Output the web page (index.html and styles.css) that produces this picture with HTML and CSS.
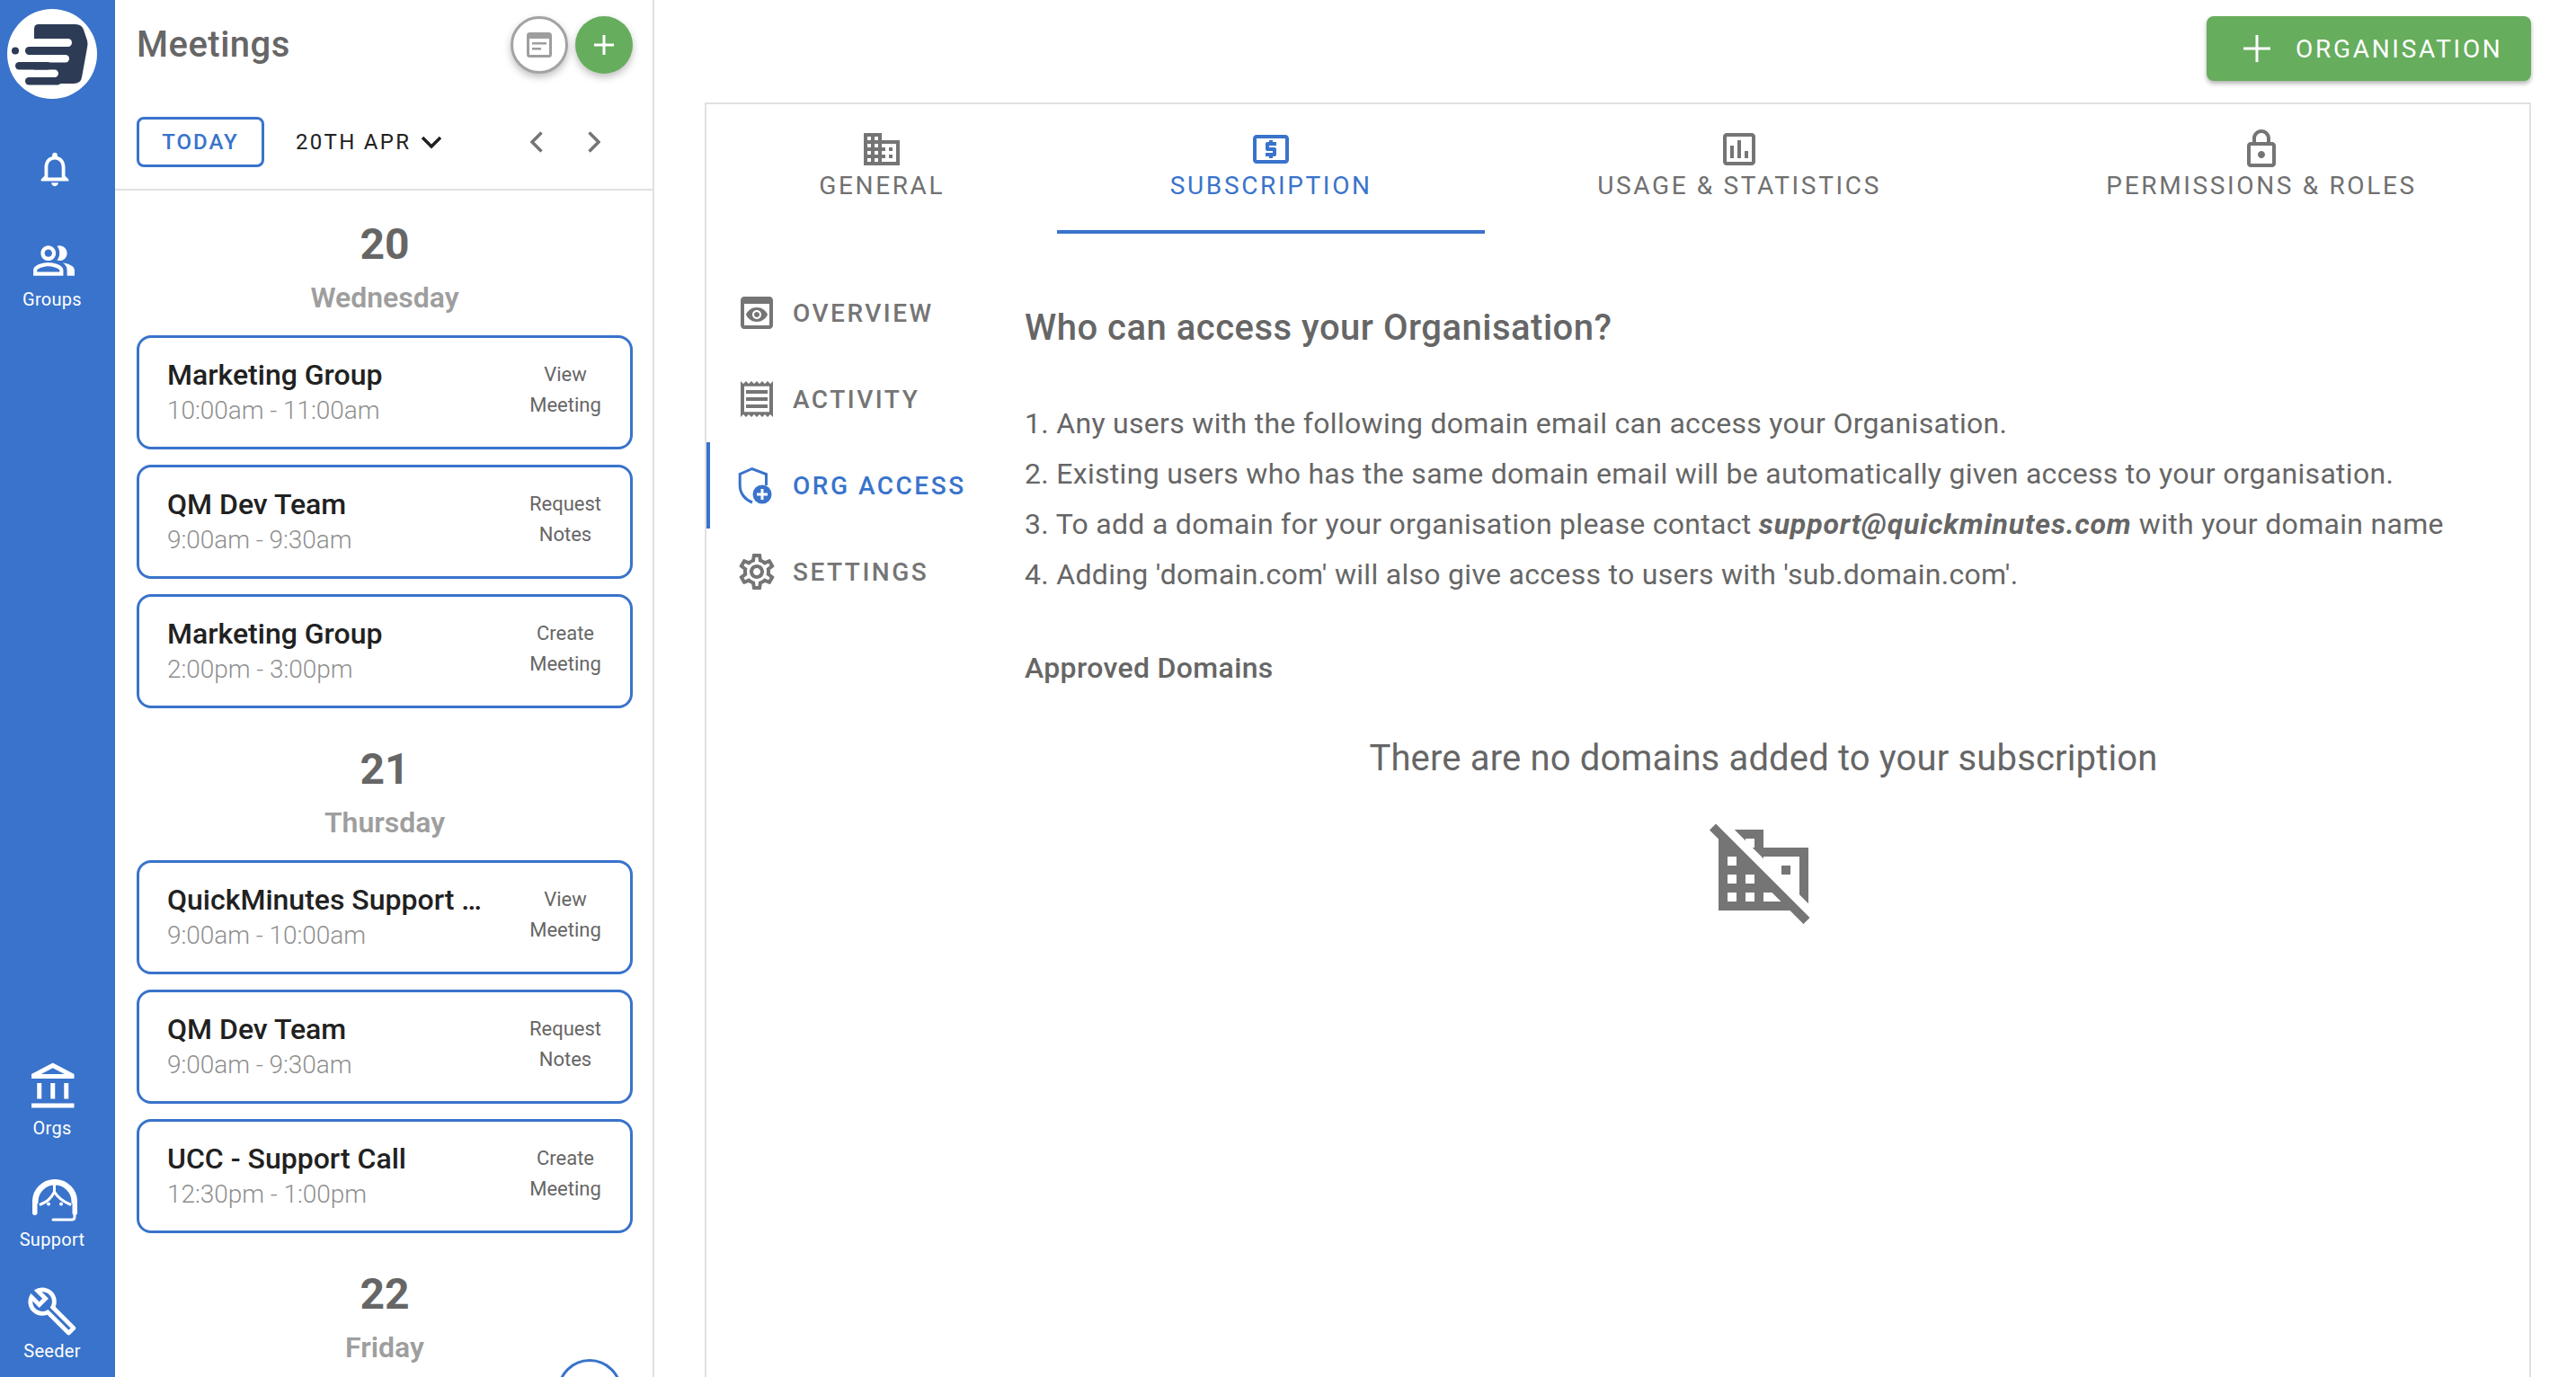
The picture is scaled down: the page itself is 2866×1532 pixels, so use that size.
FILE: index.html
```html
<!DOCTYPE html>
<html lang="en">
<head>
<meta charset="utf-8">
<title>Organisation access</title>
<link rel="stylesheet" href="styles.css">
</head>
<body>
<nav class="rail">
  <div class="rail-top">
    <svg class="logo" viewBox="0 0 100 100">
      <circle cx="50" cy="50" r="50" fill="#fff"/>
      <path fill="#2d3b55" d="M30 36V22q0-5 5-5H76q7 0 9 6l4 12q1 4 0 8l-6 33q-1 7-9 7H30z"/>
      <rect x="22" y="33" width="50" height="9" rx="4.5" fill="#fff"/>
      <rect x="18" y="51" width="51" height="8.5" rx="4.2" fill="#fff"/>
      <rect x="18" y="67.5" width="39" height="8.5" rx="4.2" fill="#fff"/>
      <rect x="20" y="42" width="40" height="9" rx="4.5" fill="#2d3b55"/>
      <rect x="9" y="59" width="40" height="8.5" rx="4.2" fill="#2d3b55"/>
      <rect x="20" y="76" width="40" height="8.5" rx="4.2" fill="#2d3b55"/>
      <circle cx="9" cy="46.5" r="4" fill="#2d3b55"/>
    </svg>
    <svg class="bell" viewBox="0 0 24 24"><path d="M12 22c1.100 0 2-.9 2-2h-4c0 1.100.9 2 2 2zm6-6v-5c0-3.070-1.630-5.640-4.500-6.320V4c0-.83-.67-1.500-1.500-1.500s-1.500.67-1.500 1.500v.68C7.640 5.360 6 7.920 6 11v5l-2 2v1h16v-1l-2-2zm-2 1H8v-6c0-2.480 1.510-4.500 4-4.500s4 2.020 4 4.500v6z"/></svg>
    <a class="rail-item groups">
      <svg class="ic-groups" viewBox="0 0 24 24"><path d="M16.670 13.130C18.040 14.060 19 15.320 19 17v3h4v-3c0-2.180-3.570-3.470-6.330-3.870z"/><path d="M15 12c2.210 0 4-1.790 4-4s-1.790-4-4-4c-.47 0-.91.1-1.330.24C14.500 5.270 15 6.580 15 8s-.5 2.730-1.330 3.760c.42.14.86.24 1.330.24z"/><path d="M9 12c2.210 0 4-1.790 4-4s-1.790-4-4-4-4 1.790-4 4 1.790 4 4 4zm0-6c1.100 0 2 .9 2 2s-.9 2-2 2-2-.9-2-2 .9-2 2-2z"/><path d="M9 13c-2.670 0-8 1.340-8 4v3h16v-3c0-2.660-5.330-4-8-4zm6 5H3v-.99C3.200 16.290 6.300 15 9 15s5.800 1.290 6 2v1z"/></svg>
      <span>Groups</span>
    </a>
  </div>
  <div class="rail-bottom">
    <a class="rail-item item-orgs">
      <svg class="ic-orgs" viewBox="0 0 24 24"><path d="M6.500 10h-2v7h2v-7zm6 0h-2v7h2v-7zm8.500 9H2v2h19v-2zm-2.500-9h-2v7h2v-7zm-7-6.740L16.710 6H6.290l5.210-2.740m0-2.260L2 6v2h19V6l-9.500-5z"/></svg>
      <span>Orgs</span>
    </a>
    <a class="rail-item">
      <svg class="ic-support" viewBox="15 10 50 50">
        <path class="hs" d="M18.200 37V35a21.800 21.800 0 0 1 43.600 0V37"/>
        <rect x="15" y="35" width="5.500" height="15" rx="2.700"/>
        <rect x="59.500" y="35" width="5.500" height="15" rx="2.700"/>
        <path class="hs thin" d="M24 38C30 36 36 31 39.500 24C43 30 50 35 57 38M39.500 24V17"/>
        <circle cx="33" cy="37.500" r="2"/>
        <circle cx="47" cy="37.500" r="2"/>
        <path class="hs thin" d="M62 48V52Q62 55 58.500 55H38"/>
      </svg>
      <span>Support</span>
    </a>
    <a class="rail-item">
      <svg class="ic-58" viewBox="0 0 24 24"><path d="M22.610 18.990l-9.080-9.080c.93-2.340.45-5.100-1.440-7C9.790.61 6.210.4 3.660 2.260L7.500 6.110 6.080 7.520 2.250 3.690C.39 6.230.6 9.820 2.900 12.110c1.860 1.860 4.570 2.350 6.890 1.480l9.110 9.110c.39.39 1.020.39 1.410 0l2.300-2.300c.4-.38.4-1.010 0-1.410zm-3 1.600l-9.460-9.460c-.61.45-1.290.72-2 .82-1.360.2-2.790-.21-3.830-1.250C3.370 9.760 2.930 8.500 3 7.260l3.090 3.090 4.240-4.240-3.090-3.090c1.240-.07 2.490.37 3.440 1.310 1.080 1.080 1.490 2.570 1.240 3.960-.12.71-.42 1.370-.88 1.960l9.450 9.450-.88.88z"/></svg>
      <span>Seeder</span>
    </a>
  </div>
</nav>

<aside class="panel">
  <header class="panel-head">
    <div class="head-row">
      <h1 class="panel-title">Meetings</h1>
      <div class="round-group">
        <button class="round round-white">
          <svg viewBox="0 0 28 28" class="note"><rect x="1.500" y="1.500" width="25" height="25" rx="2" class="note-frame"/><rect x="1" y="1" width="26" height="6" rx="2" class="note-bar"/><rect x="6" y="11" width="16" height="2.500" class="note-bar"/><rect x="6" y="17" width="10" height="2.500" class="note-bar"/></svg>
        </button>
        <button class="round round-green">
          <svg viewBox="0 0 22 22" class="plus-sm"><path d="M11 0V22M0 11H22"/></svg>
        </button>
      </div>
    </div>
    <div class="date-row">
      <button class="today">TODAY</button>
      <span class="date-label">20TH APR</span>
      <svg class="date-caret" viewBox="0 0 24 16"><path d="M2 3L12 13L22 3"/></svg>
      <svg class="arrow" viewBox="0 0 14 24"><path d="M12.500 1.500L2 12L12.500 22.500"/></svg>
      <svg class="arrow arrow-next" viewBox="0 0 14 24"><path d="M1.500 1.500L12 12L1.500 22.500"/></svg>
    </div>
  </header>
  <div class="days">
    <section class="day">
      <div class="day-num">20</div>
      <div class="day-name">Wednesday</div>
      <div class="card"><div class="card-main"><div class="card-title">Marketing Group</div><div class="card-time">10:00am - 11:00am</div></div><div class="card-action">View<br>Meeting</div></div>
      <div class="card"><div class="card-main"><div class="card-title">QM Dev Team</div><div class="card-time">9:00am - 9:30am</div></div><div class="card-action">Request<br>Notes</div></div>
      <div class="card"><div class="card-main"><div class="card-title">Marketing Group</div><div class="card-time">2:00pm - 3:00pm</div></div><div class="card-action">Create<br>Meeting</div></div>
    </section>
    <section class="day">
      <div class="day-num">21</div>
      <div class="day-name">Thursday</div>
      <div class="card"><div class="card-main"><div class="card-title">QuickMinutes Support …</div><div class="card-time">9:00am - 10:00am</div></div><div class="card-action">View<br>Meeting</div></div>
      <div class="card"><div class="card-main"><div class="card-title">QM Dev Team</div><div class="card-time">9:00am - 9:30am</div></div><div class="card-action">Request<br>Notes</div></div>
      <div class="card"><div class="card-main"><div class="card-title">UCC - Support Call</div><div class="card-time">12:30pm - 1:00pm</div></div><div class="card-action">Create<br>Meeting</div></div>
    </section>
    <section class="day">
      <div class="day-num">22</div>
      <div class="day-name">Friday</div>
    </section>
  </div>
  <div class="float-circle"></div>
</aside>

<main class="main">
  <div class="topbar">
    <button class="org-btn">
      <svg viewBox="0 0 30 30" class="plus-lg"><path d="M15 0V30M0 15H30"/></svg>
      <span>ORGANISATION</span>
    </button>
  </div>
  <div class="sheet">
    <div class="tabs">
      <div class="tab">
        <svg viewBox="0 0 24 24"><path d="M12 7V3H2v18h20V7H12zM6 19H4v-2h2v2zm0-4H4v-2h2v2zm0-4H4V9h2v2zm0-4H4V5h2v2zm4 12H8v-2h2v2zm0-4H8v-2h2v2zm0-4H8V9h2v2zm0-4H8V5h2v2zm10 12h-8v-2h2v-2h-2v-2h2v-2h-2V9h8v10zm-2-8h-2v2h2v-2zm0 4h-2v2h2v-2z"/></svg>
        <span>GENERAL</span>
      </div>
      <div class="tab tab-active">
        <svg viewBox="0 0 24 24"><path d="M11 17h2v-1h1c.55 0 1-.45 1-1v-3c0-.55-.45-1-1-1h-3v-1h4V8h-2V7h-2v1h-1c-.55 0-1 .45-1 1v3c0 .55.45 1 1 1h3v1H9v2h2v1zm9-13H4c-1.110 0-1.990.89-1.990 2L2 18c0 1.110.89 2 2 2h16c1.110 0 2-.89 2-2V6c0-1.110-.89-2-2-2zm0 14H4V6h16v12z"/></svg>
        <span>SUBSCRIPTION</span>
      </div>
      <div class="tab">
        <svg viewBox="0 0 24 24"><path d="M19 3H5c-1.100 0-2 .9-2 2v14c0 1.100.9 2 2 2h14c1.100 0 2-.9 2-2V5c0-1.100-.9-2-2-2zm0 16H5V5h14v14zM7 10h2v7H7zm4-3h2v10h-2zm4 6h2v4h-2z"/></svg>
        <span>USAGE &amp; STATISTICS</span>
      </div>
      <div class="tab">
        <svg viewBox="0 0 24 24"><path d="M18 8h-1V6c0-2.760-2.240-5-5-5S7 3.240 7 6v2H6c-1.100 0-2 .9-2 2v10c0 1.100.9 2 2 2h12c1.100 0 2-.9 2-2V10c0-1.100-.9-2-2-2zM9 6c0-1.660 1.340-3 3-3s3 1.340 3 3v2H9V6zm9 14H6V10h12v10zm-6-3c1.100 0 2-.9 2-2s-.9-2-2-2-2 .9-2 2 .9 2 2 2z"/></svg>
        <span>PERMISSIONS &amp; ROLES</span>
      </div>
    </div>
    <div class="sheet-body">
      <ul class="menu">
        <li class="menu-item">
          <svg viewBox="0 0 24 24"><path d="M19 3H5c-1.110 0-2 .9-2 2v14c0 1.100.89 2 2 2h14c1.100 0 2-.9 2-2V5c0-1.100-.89-2-2-2zm0 16H5V7h14v12zm-5.500-6c0 .83-.67 1.500-1.500 1.500s-1.500-.67-1.500-1.500.67-1.500 1.500-1.500 1.500.67 1.500 1.500zM12 9c-2.730 0-5.060 1.660-6 4 .94 2.340 3.270 4 6 4s5.060-1.660 6-4c-.94-2.340-3.270-4-6-4zm0 6.500c-1.380 0-2.500-1.120-2.500-2.500s1.120-2.500 2.500-2.500 2.500 1.120 2.500 2.500-1.120 2.500-2.500 2.500z"/></svg>
          <span>OVERVIEW</span>
        </li>
        <li class="menu-item">
          <svg viewBox="0 0 24 24"><path d="M19.500 3.500L18 2l-1.500 1.500L15 2l-1.500 1.500L12 2l-1.500 1.500L9 2 7.500 3.500 6 2 4.500 3.500 3 2v20l1.500-1.500L6 22l1.500-1.500L9 22l1.500-1.500L12 22l1.500-1.500L15 22l1.500-1.500L18 22l1.500-1.500L21 22V2l-1.500 1.500zM19 19.090H5V4.910h14v14.180zM6 15h12v2H6zm0-4h12v2H6zm0-4h12v2H6z"/></svg>
          <span>ACTIVITY</span>
        </li>
        <li class="menu-item menu-active">
          <svg viewBox="0 0 48 48">
            <path class="shield" d="M34.500 24V11.500L18.700 5.500L5.200 11.500V24C5.200 33 11 40 19 43"/>
            <circle cx="30" cy="34" r="10.500"/>
            <path class="shield-plus" d="M30 28V40M24 34H36"/>
          </svg>
          <span>ORG ACCESS</span>
        </li>
        <li class="menu-item">
          <svg viewBox="0 0 24 24"><path d="M19.430 12.980c.04-.32.07-.64.07-.98 0-.34-.03-.66-.07-.98l2.110-1.650c.19-.15.24-.42.12-.64l-2-3.460c-.09-.16-.26-.25-.44-.25-.06 0-.12.01-.17.03l-2.490 1c-.52-.4-1.080-.73-1.690-.98l-.38-2.650C14.460 2.180 14.250 2 14 2h-4c-.25 0-.46.18-.49.42l-.38 2.650c-.61.25-1.170.59-1.690.98l-2.490-1c-.06-.02-.12-.03-.18-.03-.17 0-.34.09-.43.25l-2 3.460c-.13.22-.07.49.12.64l2.110 1.650c-.04.32-.07.65-.07.98 0 .33.03.66.07.98l-2.110 1.650c-.19.15-.24.42-.12.64l2 3.460c.09.16.26.25.44.25.06 0 .12-.01.17-.03l2.490-1c.52.4 1.080.73 1.690.98l.38 2.650c.03.24.24.42.49.42h4c.25 0 .46-.18.49-.42l.38-2.650c.61-.25 1.170-.59 1.690-.98l2.490 1c.06.02.12.03.18.03.17 0 .34-.09.43-.25l2-3.460c.12-.22.07-.49-.12-.64l-2.110-1.650zm-1.980-1.710c.04.31.05.52.05.73 0 .21-.02.43-.05.73l-.14 1.130.89.7 1.080.84-.7 1.210-1.270-.51-1.040-.42-.9.68c-.43.32-.84.56-1.250.73l-1.060.43-.16 1.130-.2 1.350h-1.400l-.19-1.350-.16-1.130-1.060-.43c-.43-.18-.83-.41-1.230-.71l-.91-.7-1.060.43-1.270.51-.7-1.210 1.080-.84.89-.7-.14-1.130c-.03-.31-.05-.54-.05-.74s.02-.43.05-.73l.14-1.130-.89-.7-1.080-.84.7-1.210 1.270.51 1.040.42.9-.68c.43-.32.84-.56 1.250-.73l1.060-.43.16-1.130.2-1.350h1.390l.19 1.350.16 1.130 1.060.43c.43.18.83.41 1.230.71l.91.7 1.060-.43 1.270-.51.7 1.210-1.070.85-.89.7.14 1.130zM12 8c-2.210 0-4 1.790-4 4s1.790 4 4 4 4-1.790 4-4-1.790-4-4-4zm0 6c-1.100 0-2-.9-2-2s.9-2 2-2 2 .9 2 2-.9 2-2 2z"/></svg>
          <span>SETTINGS</span>
        </li>
      </ul>
      <article class="content">
        <h2 class="content-title">Who can access your Organisation?</h2>
        <ol class="rules">
          <li>1. Any users with the following domain email can access your Organisation.</li>
          <li>2. Existing users who has the same domain email will be automatically given access to your organisation.</li>
          <li>3. To add a domain for your organisation please contact <b>support@quickminutes.com</b> with your domain name</li>
          <li>4. Adding 'domain.com' will also give access to users with 'sub.domain.com'.</li>
        </ol>
        <h3 class="approved">Approved Domains</h3>
        <div class="empty">
          <p>There are no domains added to your subscription</p>
          <svg viewBox="0 0 24 24"><path d="M1.410 1.690L0 3.100l2 2V21h15.900l3 3 1.410-1.410-20.900-20.900zM6 19H4v-2h2v2zm0-4H4v-2h2v2zm0-4H4V9h2v2zm4 8H8v-2h2v2zm0-4H8v-2h2v2zm2 4v-2h1.900l2 2H12zM8 5h2v2h-.45L12 9.450V9h8v8.450l2 2V7H12V3H5.550L8 5.450V5zm8 6h2v2h-2z"/></svg>
        </div>
      </article>
    </div>
  </div>
</main>
</body>
</html>
```

FILE: styles.css
```css
* { box-sizing: border-box; }
html, body { margin: 0; height: 100%; }
body {
  display: flex;
  width: 2866px;
  height: 1532px;
  overflow: hidden;
  background: #fff;
  font-family: Roboto, "Liberation Sans", sans-serif;
  color: #666;
}

/* left rail */
.rail {
  flex: none;
  width: 128px;
  height: 100%;
  padding: 10px 12px 17px 0;
  background: #3973cb;
  color: #fff;
  display: flex;
  flex-direction: column;
  justify-content: space-between;
  align-items: center;
}
.rail-top { display: flex; flex-direction: column; align-items: center; }
.rail-bottom { display: flex; flex-direction: column; align-items: center; gap: 39px; }
.logo { width: 100px; height: 100px; display: block; }
.bell { width: 46px; height: 46px; margin: 55px 0 0 6px; fill: #fff; display: block; }
.rail-item { display: flex; flex-direction: column; align-items: center; font-size: 20px; line-height: 24px; letter-spacing: .3px; }
.rail-item svg { fill: #fff; display: block; }
.groups { margin-top: 54px; }
.item-orgs { margin-bottom: 4px; }
.ic-groups { width: 50px; height: 50px; margin: 0 0 6px 4px; }
.ic-orgs { width: 60px; height: 60px; margin: 0 0 3px 4px; }
.ic-58 { width: 58px; height: 58px; margin-bottom: 3px; }
.ic-support { width: 50px; height: 50px; margin: 2px 0 5px 6px; }
.hs { fill: none; stroke: #fff; stroke-width: 6.500; }
.hs.thin { stroke-width: 3; stroke-linecap: round; }

/* meetings panel */
.panel {
  flex: none;
  position: relative;
  width: 600px;
  height: 100%;
  border-right: 2px solid #e0e0e0;
  overflow: hidden;
}
.panel-head { padding: 18px 22px 24px 24px; border-bottom: 2px solid #e0e0e0; }
.head-row { display: flex; align-items: center; justify-content: space-between; height: 64px; }
.panel-title { margin: 0; font-size: 40px; line-height: 48px; font-weight: 500; letter-spacing: .5px; color: #666; }
.round-group { display: flex; gap: 8px; }
.round {
  width: 64px;
  height: 64px;
  border-radius: 50%;
  padding: 0;
  display: flex;
  align-items: center;
  justify-content: center;
  box-shadow: 0 4px 8px rgba(0, 0, 0, .25);
}
.round-white { background: #fff; border: 3px solid #a3a3a3; }
.round-green { background: #66ad5d; border: 0; }
.note { width: 28px; height: 28px; }
.note-frame { fill: none; stroke: #9e9e9e; stroke-width: 3; }
.note-bar { fill: #9e9e9e; }
.plus-sm { width: 22px; height: 22px; }
.plus-sm path, .plus-lg path { stroke: #fff; stroke-width: 3; fill: none; }
.date-row { display: flex; align-items: center; margin-top: 48px; height: 56px; }
.today {
  width: 142px;
  height: 56px;
  background: #fff;
  border: 3px solid #3973cb;
  border-radius: 8px;
  color: #3973cb;
  font: 500 24px Roboto, sans-serif;
  letter-spacing: 2px;
}
.date-label { margin-left: 35px; font-size: 24px; font-weight: 400; letter-spacing: 2.300px; color: #212121; }
.date-caret { width: 24px; height: 16px; margin-left: 11px; }
.date-caret path { fill: none; stroke: #212121; stroke-width: 3.500; }
.arrow { width: 14px; height: 24px; margin-left: 98px; }
.arrow-next { margin-left: 50px; }
.arrow path { fill: none; stroke: #757575; stroke-width: 3.500; }
.days { padding: 32px 22px 0 24px; }
.day { margin-bottom: 40px; }
.day-num { font-size: 48px; line-height: 56px; font-weight: 700; text-align: center; color: #666; }
.day-name { margin: 9px 0 20px; font-size: 32px; line-height: 44px; font-weight: 600; text-align: center; color: #9e9e9e; }
.card {
  display: flex;
  justify-content: space-between;
  height: 127px;
  margin-bottom: 17px;
  padding: 21px 12px 0 31px;
  border: 3px solid #3973cb;
  border-radius: 16px;
}
.card:last-child { margin-bottom: 0; }
.card-title { font-size: 32px; line-height: 40px; font-weight: 500; color: #212121; }
.card-time { font-size: 28px; line-height: 40px; font-weight: 300; letter-spacing: -.05px; color: #8f8f8f; }
.card-action { width: 120px; padding-top: 3px; font-size: 22px; line-height: 34px; text-align: center; color: #666; }
.float-circle {
  position: absolute;
  left: 492px;
  top: 1512px;
  width: 72px;
  height: 72px;
  border: 3px solid #3973cb;
  border-radius: 50%;
  background: #fff;
}

/* main */
.main { flex: 1; min-width: 0; display: flex; flex-direction: column; padding: 0 50px 0 56px; height: 100%; }
.topbar { flex: none; display: flex; justify-content: flex-end; height: 114px; padding: 18px 0 0 0; }
.org-btn {
  display: flex;
  align-items: center;
  width: 361px;
  height: 72px;
  padding: 0 0 0 41px;
  border: 0;
  border-radius: 8px;
  background: #66ad5d;
  color: #fff;
  font: 400 28px Roboto, sans-serif;
  letter-spacing: 2.700px;
  box-shadow: 0 3px 5px rgba(0, 0, 0, .3);
}
.plus-lg { width: 30px; height: 30px; margin-right: 28px; }
.sheet { flex: 1; min-height: 0; border: 2px solid #e0e0e0; border-bottom: 0; overflow: hidden; }
.tabs { display: flex; }
.tab {
  flex: auto;
  display: flex;
  flex-direction: column;
  align-items: center;
  height: 144px;
  padding-top: 26px;
  border-bottom: 4px solid transparent;
  font-size: 28px;
  line-height: 34px;
  font-weight: 400;
  letter-spacing: 2.650px;
  color: #707070;
}
.tab svg { width: 48px; height: 48px; fill: #757575; flex: none; }
.tab-active { color: #3973cb; border-bottom-color: #3973cb; }
.tab-active svg { fill: #3973cb; }
.sheet-body { display: flex; }
.menu { flex: none; width: 354px; margin: 0; padding: 40px 0 0; list-style: none; }
.menu-item {
  display: flex;
  align-items: center;
  gap: 16px;
  height: 96px;
  padding-left: 28px;
  border-left: 4px solid transparent;
  font-size: 28px;
  font-weight: 500;
  letter-spacing: 2.500px;
  color: #757575;
}
.menu-item svg { width: 48px; height: 48px; fill: #757575; flex: none; }
.menu-active { color: #3973cb; border-left-color: #3973cb; }
.menu-active svg { fill: #3973cb; }
.shield { fill: none; stroke: #3973cb; stroke-width: 3; }
.shield-plus { fill: none; stroke: #fff; stroke-width: 3; }
.content { flex: 1; min-width: 0; padding: 81px 30px 0 0; }
.content-title { margin: 0; font-size: 40px; line-height: 48px; font-weight: 500; letter-spacing: .5px; color: #666; }
.rules { margin: 54px 0 0; padding: 0; list-style: none; font-size: 32px; line-height: 56px; letter-spacing: .3px; color: #666; }
.rules b { font-style: italic; font-weight: 700; letter-spacing: .83px; }
.approved { margin: 56px 0 0; font-size: 32px; line-height: 40px; font-weight: 500; letter-spacing: .34px; color: #666; }
.empty { margin-top: 53px; text-align: center; }
.empty p { margin: 0; font-size: 40px; line-height: 56px; letter-spacing: .15px; color: #666; }
.empty svg { display: block; width: 120px; height: 120px; margin: 36px auto 0; fill: #757575; }
```
